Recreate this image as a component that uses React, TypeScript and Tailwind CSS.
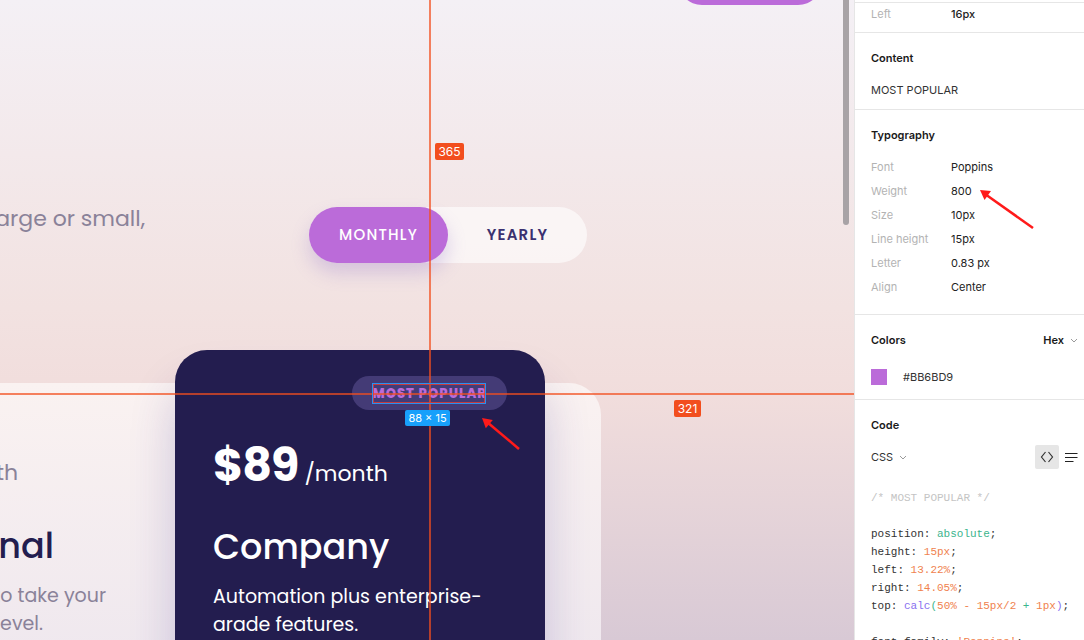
import React from "react";

function Canvas() {
  return (
    <div className="relative h-full w-[854px] shrink-0 overflow-hidden bg-[linear-gradient(180deg,#f4f0f5_0%,#f2e2e1_48%,#f1dddc_62%,#d8c9d5_100%)] font-['Poppins','Inter',sans-serif]">
      <div className="flex flex-col">
        <div className="ml-[678px] mt-[-43px] h-[48px] w-[144px] shrink-0 rounded-full bg-[#bb6bd9]" />
        <div className="mt-[202px] flex h-[56px]">
          <div className="flex w-[145px] shrink-0 justify-end whitespace-nowrap">
            <p className="mt-[-6px] text-[22px] leading-[36px] text-[#8a8299]">
              Whether your team is large or small,
            </p>
          </div>
          <div className="ml-[164px] flex h-[56px] w-[278px] rounded-full bg-white/60">
            <div className="flex h-full w-[139px] items-center justify-center rounded-full bg-[#bb6bd9] text-[15px] font-medium tracking-[1.2px] text-white shadow-[0_10px_18px_rgba(140,110,200,0.28)]">
              MONTHLY
            </div>
            <div className="flex flex-1 items-center justify-center text-[15px] font-semibold tracking-[1.2px] text-[#3b3170]">
              YEARLY
            </div>
          </div>
        </div>
        <div className="ml-[-400px] mt-[120px] flex h-[300px] w-[1001px] shrink-0 rounded-tr-[32px] bg-[linear-gradient(180deg,#faf2f1,#eee7ee)]">
          <div className="w-[575px] shrink-0 pt-[53px]">
            <div className="flex h-[56px] w-[418px] items-baseline justify-end whitespace-nowrap">
              <span className="text-[46px] font-bold leading-[56px] tracking-[-1px] text-[#231d4f]">$54</span>
              <span className="ml-[6px] text-[22px] text-[#8a8299]">/month</span>
            </div>
            <div className="mt-[30px] flex h-[48px] w-[454px] justify-end whitespace-nowrap text-[35px] font-medium leading-[48px] text-[#231d4f]">
              Professional
            </div>
            <div className="mt-[12px] flex w-[506px] justify-end whitespace-nowrap text-[19px] leading-[28px] text-[#8a8299]">
              Advanced tools to take your
            </div>
            <div className="flex w-[443px] justify-end whitespace-nowrap text-[19px] leading-[28px] text-[#8a8299]">
              work to the next level.
            </div>
          </div>
          <div className="mt-[-33px] flex h-[333px] w-[370px] shrink-0 flex-col rounded-[32px] bg-[#231d4f] px-[38px] pt-[26px] shadow-[0_35px_45px_rgba(60,45,140,0.22)]">
            <div className="flex h-[34px] items-center self-end rounded-full bg-[#443b76] px-[20px]">
              <span className="text-[13px] font-extrabold leading-[19px] tracking-[1.08px] text-[#bb6bd9]">
                MOST POPULAR
              </span>
            </div>
            <div className="mt-[27px] flex h-[56px] items-baseline whitespace-nowrap text-white">
              <span className="text-[46px] font-bold leading-[56px] tracking-[-1px]">$89</span>
              <span className="ml-[6px] text-[22px]">/month</span>
            </div>
            <div className="mt-[30px] h-[48px] text-[35px] font-medium leading-[48px] text-white">Company</div>
            <div className="mt-[12px] text-[19px] leading-[28px] text-white">
              Automation plus enterprise-
              <br />
              arade features.
            </div>
          </div>
        </div>
      </div>

      {/* measurement overlay */}
      <div className="absolute left-[428.5px] top-0 z-10 h-full w-[2px] bg-[#f24e1e] opacity-70" />
      <div className="absolute left-0 top-[392.5px] z-10 h-[2px] w-full bg-[#f24e1e] opacity-70" />
      <div className="absolute left-[372px] top-[383px] z-10 h-[21px] w-[114px] border border-[#2a8ff0]" />
      <div className="absolute left-[373px] top-[384px] z-10 h-[19px] w-[112px] border border-[#e63c32] opacity-80" />
      <div className="absolute left-[405px] top-[410px] z-10 flex h-[16px] w-[45px] items-center justify-center rounded-[2px] bg-[#18a0fb] font-['Inter',sans-serif] text-[11px] text-white">
        88 × 15
      </div>
      <div className="absolute left-[435px] top-[143px] z-10 flex h-[17px] w-[29px] items-center justify-center rounded-[2px] bg-[#f24e1e] font-['Inter',sans-serif] text-[12px] text-white">
        365
      </div>
      <div className="absolute left-[674px] top-[400px] z-10 flex h-[17px] w-[27px] items-center justify-center rounded-[2px] bg-[#f24e1e] font-['Inter',sans-serif] text-[12px] text-white">
        321
      </div>
      <div className="absolute left-[843px] top-[-10px] z-10 h-[235px] w-[6px] rounded-full bg-[#a8a3a6]" />
    </div>
  );
}

function Row({ label, value }: { label: string; value: string }) {
  return (
    <div className="flex h-[24px] items-center">
      <span className="w-[80px] text-[#b3b3b3]">{label}</span>
      <span className="text-[#222]">{value}</span>
    </div>
  );
}

function Chevron() {
  return (
    <svg width="8" height="5" viewBox="0 0 8 5" className="ml-[6px]">
      <polyline points="1,1 4,4 7,1" fill="none" stroke="#9a9a9a" strokeWidth="1" />
    </svg>
  );
}

function Panel() {
  return (
    <div className="flex h-full w-[230px] shrink-0 flex-col border-l border-[#e6e6e6] bg-white text-[11px] leading-[20px] text-[#222]">
      <div className="h-[3px] shrink-0 border-b border-[#e6e6e6]" />
      <div className="flex h-[30px] shrink-0 items-start border-b border-[#e6e6e6] px-[16px] pt-[1px]">
        <span className="w-[80px] text-[#b3b3b3]">Left</span>
        <span className="font-medium text-[#222]">16px</span>
      </div>
      <div className="flex h-[77px] shrink-0 flex-col border-b border-[#e6e6e6] px-[16px] pt-[15px]">
        <div className="font-semibold text-[#1a1a1a]">Content</div>
        <div className="mt-[12px] text-[#333]">MOST POPULAR</div>
      </div>
      <div className="flex h-[205px] shrink-0 flex-col border-b border-[#e6e6e6] px-[16px] pt-[15px]">
        <div className="font-semibold text-[#1a1a1a]">Typography</div>
        <div className="mt-[10px] flex flex-col">
          <Row label="Font" value="Poppins" />
          <Row label="Weight" value="800" />
          <Row label="Size" value="10px" />
          <Row label="Line height" value="15px" />
          <Row label="Letter" value="0.83 px" />
          <Row label="Align" value="Center" />
        </div>
      </div>
      <div className="flex h-[85px] shrink-0 flex-col border-b border-[#e6e6e6] px-[16px] pt-[15px]">
        <div className="mr-[-10px] flex items-center justify-between">
          <span className="font-semibold text-[#1a1a1a]">Colors</span>
          <span className="flex items-center font-semibold text-[#1a1a1a]">
            Hex
            <Chevron />
          </span>
        </div>
        <div className="mt-[17px] flex items-center">
          <div className="h-[16px] w-[16px] bg-[#bb6bd9]" />
          <span className="ml-[16px] text-[#333]">#BB6BD9</span>
        </div>
      </div>
      <div className="flex flex-1 flex-col px-[16px] pt-[15px]">
        <div className="font-semibold text-[#1a1a1a]">Code</div>
        <div className="mr-[-10px] mt-[10px] flex h-[24px] items-center">
          <span className="flex items-center text-[#333]">
            CSS
            <Chevron />
          </span>
          <div className="ml-auto flex h-[24px] w-[24px] items-center justify-center rounded-[2px] bg-[#e6e6e6]">
            <svg width="14" height="12" viewBox="0 0 14 12">
              <polyline points="5.5,1 1.5,6 5.5,11" fill="none" stroke="#333" strokeWidth="1.2" />
              <polyline points="8.5,1 12.5,6 8.5,11" fill="none" stroke="#333" strokeWidth="1.2" />
            </svg>
          </div>
          <svg width="13" height="12" viewBox="0 0 13 12" className="ml-[6px]">
            <line x1="0" y1="2.5" x2="12.5" y2="2.5" stroke="#222" strokeWidth="1" />
            <line x1="0" y1="6.5" x2="12.5" y2="6.5" stroke="#222" strokeWidth="1" />
            <line x1="0" y1="10.5" x2="8.5" y2="10.5" stroke="#222" strokeWidth="1" />
          </svg>
        </div>
        <div className="mt-[20px] whitespace-pre font-['Liberation_Mono',monospace] text-[11px] leading-[18px] text-[#333]">
          <div className="text-[#c4c4c4]">/* MOST POPULAR */</div>
          <div>&nbsp;</div>
          <div>
            position: <span className="text-[#3bb58d]">absolute</span>;
          </div>
          <div>
            height: <span className="text-[#f0824e]">15px</span>;
          </div>
          <div>
            left: <span className="text-[#f0824e]">13.22%</span>;
          </div>
          <div>
            right: <span className="text-[#f0824e]">14.05%</span>;
          </div>
          <div>
            top: <span className="text-[#8a6ff0]">calc</span>
            <span className="text-[#3bb58d]">(</span>
            <span className="text-[#f0824e]">50% - 15px/2 </span>
            <span className="text-[#3bb58d]">+</span>
            <span className="text-[#f0824e]"> 1px</span>
            <span className="text-[#8a6ff0]">)</span>;
          </div>
          <div>&nbsp;</div>
          <div>
            font-family: <span className="text-[#f0824e]">'Poppins'</span>;
          </div>
        </div>
      </div>
    </div>
  );
}

function Arrows() {
  return (
    <svg className="pointer-events-none absolute left-0 top-0 z-20" width="1084" height="640" viewBox="0 0 1084 640">
      <line x1="519" y1="449" x2="487" y2="422" stroke="#ff1a1a" strokeWidth="2.5" />
      <polygon points="482,418 485.8,428.3 492.8,419.9" fill="#ff1a1a" />
      <line x1="1033" y1="228" x2="985" y2="194" stroke="#ff1a1a" strokeWidth="2.5" />
      <polygon points="980,190 984.5,200 991,191.1" fill="#ff1a1a" />
    </svg>
  );
}

export default function App() {
  return (
    <div className="relative flex h-[640px] w-[1084px] overflow-hidden bg-white font-['Inter',sans-serif]">
      <Canvas />
      <Panel />
      <Arrows />
    </div>
  );
}
